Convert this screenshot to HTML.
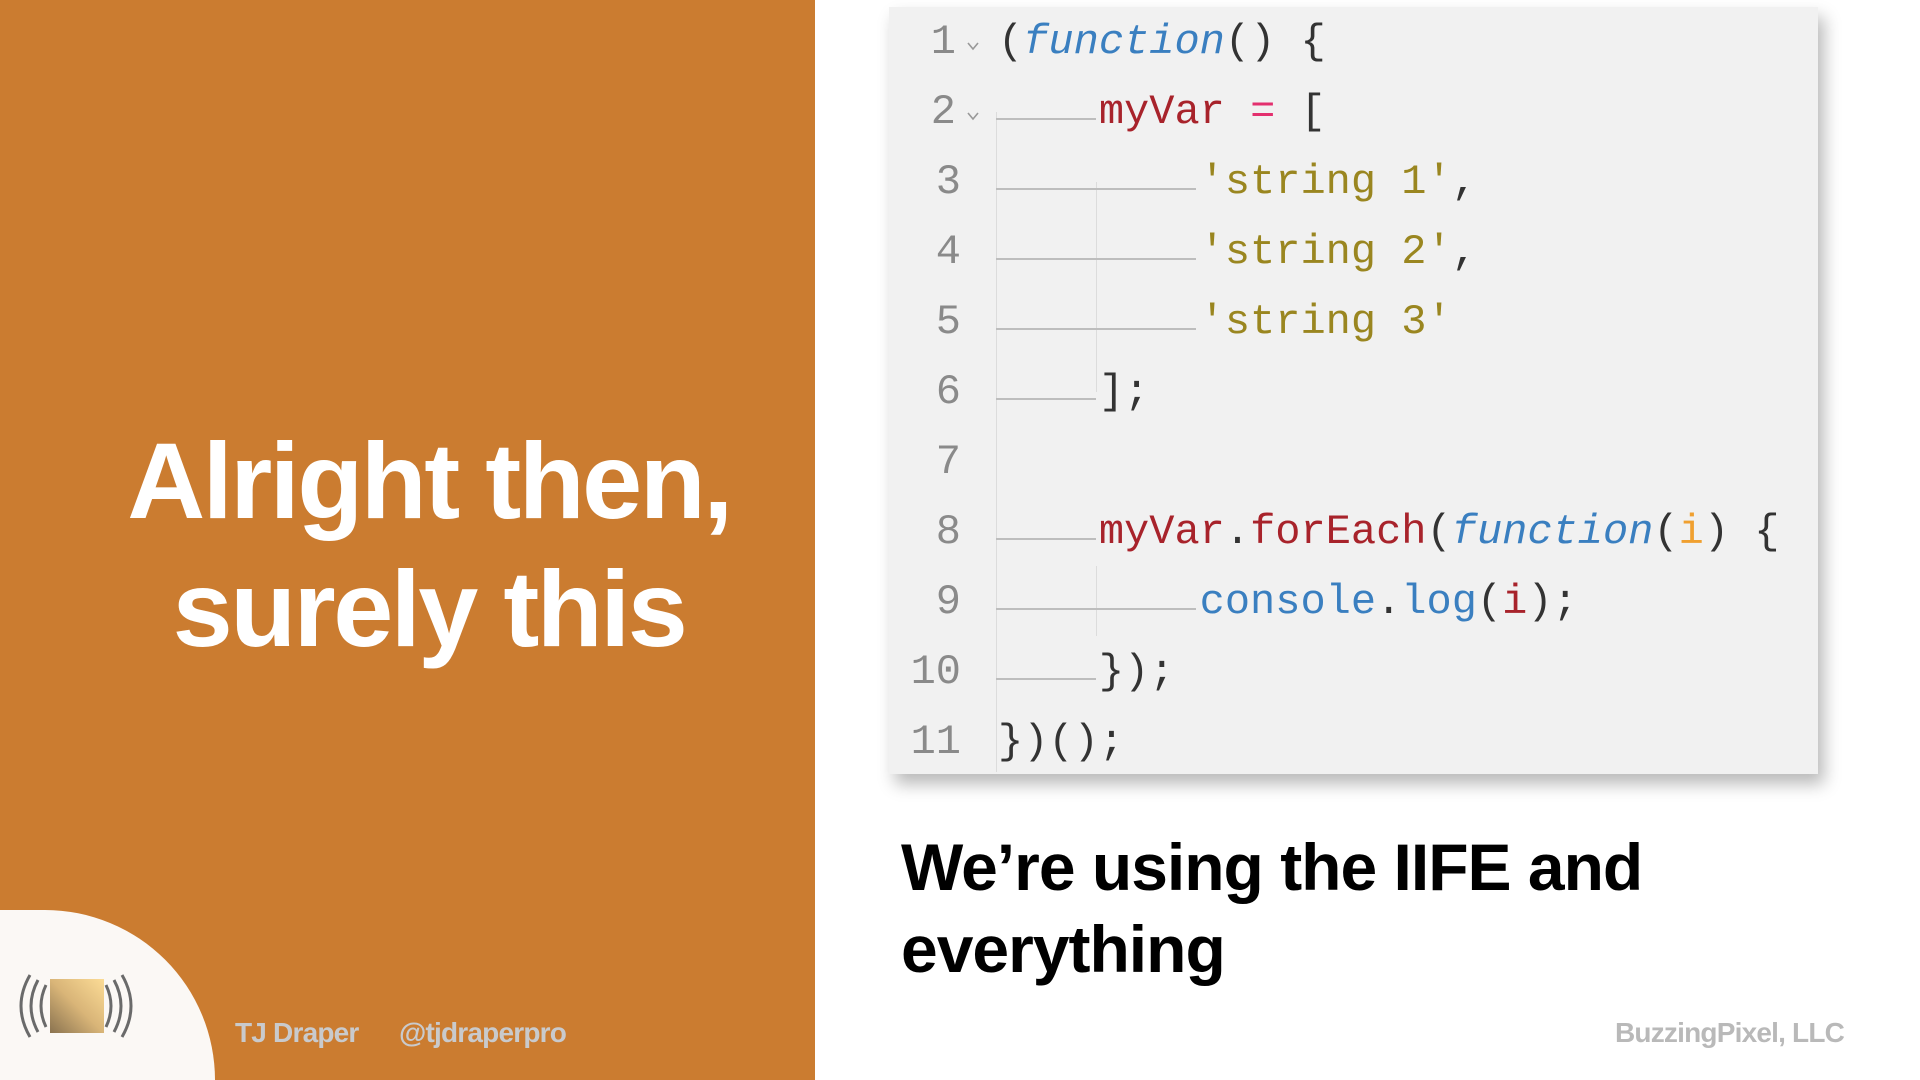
<!DOCTYPE html>
<html><head><meta charset="utf-8"><style>
*{margin:0;padding:0;box-sizing:border-box}
html,body{width:1920px;height:1080px;overflow:hidden}
body{background:#fff;position:relative;font-family:"Liberation Sans",sans-serif}
#left{position:absolute;left:0;top:0;width:815px;height:1080px;background:#CB7C30;overflow:hidden}
#circ{position:absolute;left:-215px;top:910px;width:430px;height:170px;border-radius:215px 215px 0 0/215px 215px 0 0;background:#fbf8f5}
h1{position:absolute;left:0;width:858px;top:417px;text-align:center;color:#fff;font-size:108px;line-height:128px;font-weight:bold;letter-spacing:-2.5px}
.foot{position:absolute;top:1017px;font-size:28px;line-height:32px;font-weight:bold;color:#c9cacc;letter-spacing:-0.8px}
#code{position:absolute;left:889px;top:7px;width:929px;height:767px;background:#f1f1f1;box-shadow:6px 10px 16px rgba(0,0,0,.28)}
.ln{position:absolute;left:0;width:961px;text-align:right;font-family:"Liberation Mono",monospace;font-size:42px;color:#8a8a8a;line-height:70px}
.cl{position:absolute;left:998px;font-family:"Liberation Mono",monospace;font-size:42px;color:#333;line-height:70px;white-space:pre}
.g{position:absolute;height:2px;background:#bdbdbd}
.v{position:absolute;width:1px;background:#dcdcdc}
.r{color:#a8232b}.b{color:#3a7fc0}.i{font-style:italic}.o{color:#9a8620}.p{color:#e3306e}.y{color:#f0a030}
.arr{position:absolute;width:14px;height:10px}
#cap{position:absolute;left:901px;top:826px;font-size:66px;line-height:82px;font-weight:bold;color:#000;letter-spacing:-1px}
</style></head><body>
<div id="left">
<div id="circ"></div>
<h1>Alright then,<br>surely this</h1>
<svg style="position:absolute;left:14px;top:972px" width="124" height="68" viewBox="0 0 124 68">
<defs><linearGradient id="gd" x1="1" y1="0" x2="0" y2="1"><stop offset="0" stop-color="#fcdc96"/><stop offset=".5" stop-color="#d9b578"/><stop offset="1" stop-color="#8a7350"/></linearGradient></defs>
<g fill="none" stroke="#6a6a6a" stroke-width="3">
<path d="M16 3 Q-2 34 16 65"/><path d="M24 8 Q10 34 24 60"/><path d="M32 13 Q22 34 32 55"/>
<path d="M108 3 Q126 34 108 65"/><path d="M100 8 Q114 34 100 60"/><path d="M92 13 Q102 34 92 55"/>
</g>
<rect x="36" y="7" width="54" height="54" fill="url(#gd)"/>
</svg>
<div class="foot" style="left:235px">TJ Draper</div>
<div class="foot" style="left:399px">@tjdraperpro</div>
</div>

<div id="code"></div>
<div class="v" style="left:996px;top:112px;height:660px"></div>
<div class="v" style="left:1096px;top:182px;height:210px"></div>
<div class="v" style="left:1096px;top:566px;height:70px"></div>

<div class="ln" style="top:7px;width:956px">1</div>
<div class="ln" style="top:77px;width:956px">2</div>
<svg class="arr" style="left:966px;top:41px" viewBox="0 0 14 10"><path d="M2 2 L7 8 L12 2" fill="none" stroke="#999" stroke-width="1.6"/></svg>
<svg class="arr" style="left:966px;top:111px" viewBox="0 0 14 10"><path d="M2 2 L7 8 L12 2" fill="none" stroke="#999" stroke-width="1.6"/></svg>
<div class="ln" style="top:147px">3</div>
<div class="ln" style="top:217px">4</div>
<div class="ln" style="top:287px">5</div>
<div class="ln" style="top:357px">6</div>
<div class="ln" style="top:427px">7</div>
<div class="ln" style="top:497px">8</div>
<div class="ln" style="top:567px">9</div>
<div class="ln" style="top:637px">10</div>
<div class="ln" style="top:707px">11</div>

<div class="g" style="left:996px;width:100px;top:118px"></div>
<div class="g" style="left:996px;width:200px;top:188px"></div>
<div class="g" style="left:996px;width:200px;top:258px"></div>
<div class="g" style="left:996px;width:200px;top:328px"></div>
<div class="g" style="left:996px;width:100px;top:398px"></div>
<div class="g" style="left:996px;width:100px;top:538px"></div>
<div class="g" style="left:996px;width:200px;top:608px"></div>
<div class="g" style="left:996px;width:100px;top:678px"></div>

<div class="cl" style="top:7px">(<span class="b i">function</span>() {</div>
<div class="cl" style="top:77px">    <span class="r">myVar</span> <span class="p">=</span> [</div>
<div class="cl" style="top:147px">        <span class="o">'string 1'</span>,</div>
<div class="cl" style="top:217px">        <span class="o">'string 2'</span>,</div>
<div class="cl" style="top:287px">        <span class="o">'string 3'</span></div>
<div class="cl" style="top:357px">    ];</div>
<div class="cl" style="top:497px">    <span class="r">myVar</span>.<span class="r">forEach</span>(<span class="b i">function</span>(<span class="y">i</span>) {</div>
<div class="cl" style="top:567px">        <span class="b">console</span>.<span class="b">log</span>(<span class="r">i</span>);</div>
<div class="cl" style="top:637px">    });</div>
<div class="cl" style="top:707px">})();</div>

<div id="cap">We’re using the IIFE and<br>everything</div>
<div class="foot" style="left:1615px;color:#b9b9b9">BuzzingPixel, LLC</div>
</body></html>
